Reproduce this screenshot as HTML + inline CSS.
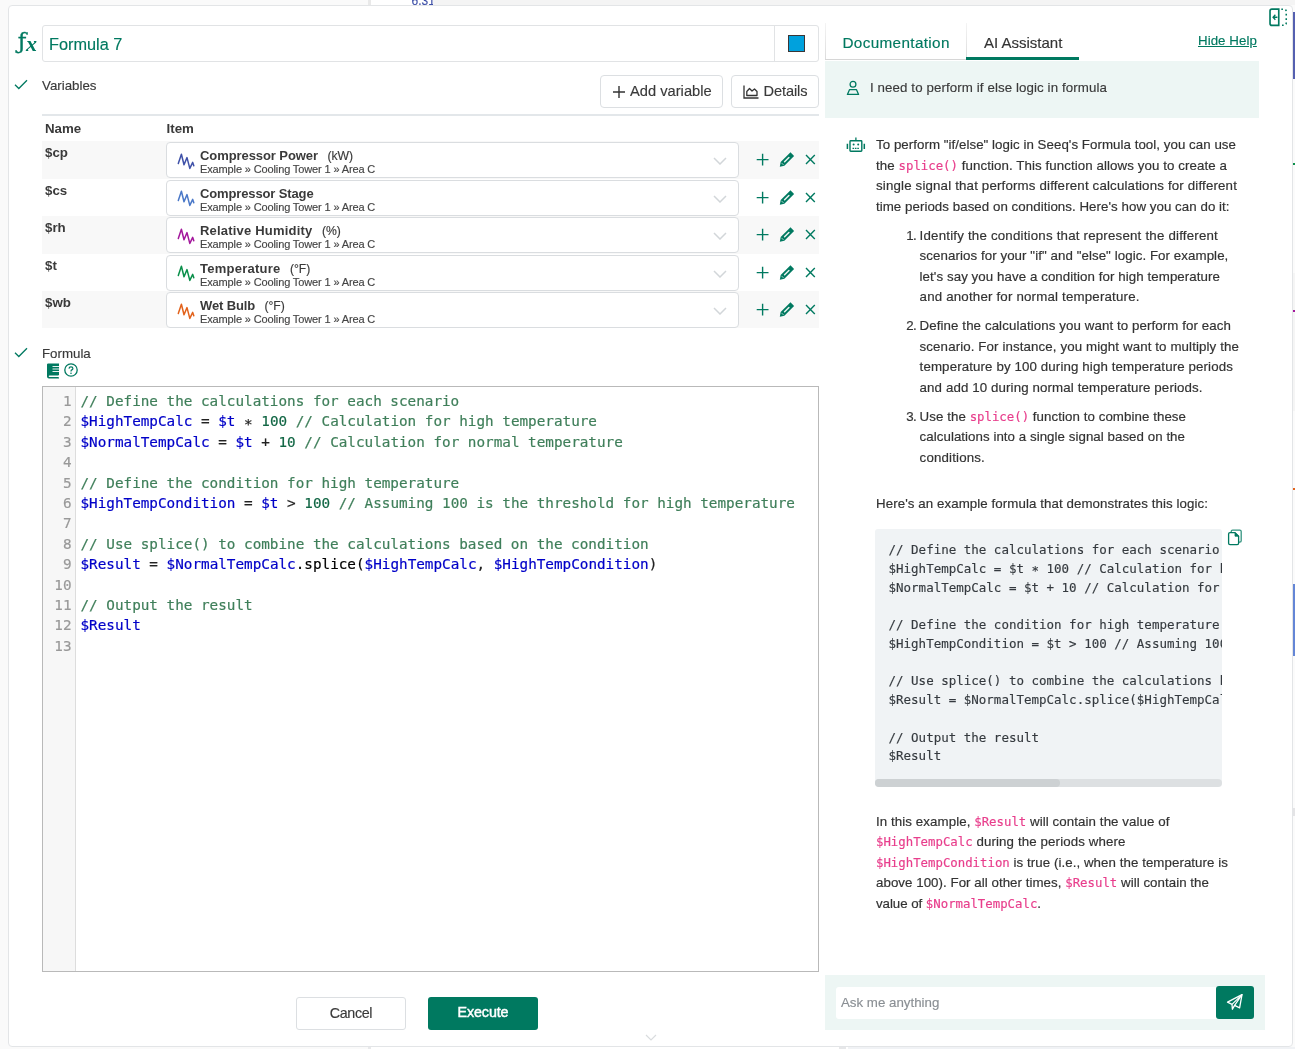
<!DOCTYPE html>
<html lang="en">
<head>
<meta charset="utf-8">
<title>Formula 7</title>
<style>
*{box-sizing:border-box}
html,body{margin:0;padding:0}
body{will-change:transform;width:1295px;height:1049px;overflow:hidden;background:#fafafa;font-family:"Liberation Sans",sans-serif;font-size:13px;color:#3a3a3a;position:relative}
.abs{position:absolute}
.g{color:#007960}
#panel{position:absolute;left:8px;top:5px;width:1285px;height:1042px;background:#fff;border:1px solid #e3e5e7;border-radius:4px}
.t{position:absolute;white-space:nowrap;line-height:1;-webkit-text-stroke:0.15px}
.sp,.sn{-webkit-text-stroke:0.15px}.hdr,.vn,.sn b{-webkit-text-stroke:0}
.mono{font-family:"DejaVu Sans Mono","Liberation Mono",monospace}
/* backdrop */
#bd1{left:0;top:0;width:368px;height:5px;background:#fafafa}
#bd2{left:368px;top:0;width:3px;height:5px;background:#e9e9e9}
#bd3{left:371px;top:0;width:62px;height:5px;background:#fff;overflow:hidden}
#bd4{left:433px;top:0;width:862px;height:5px;background:#f4f4f4}
</style>
</head>
<body>
<div class="abs" id="bd1"></div><div class="abs" id="bd2"></div>
<div class="abs" id="bd3"><span class="t" style="left:40.5px;top:-5px;font-size:12px;color:#3f51a8">6.31</span></div>
<div class="abs" id="bd4"></div>
<div class="abs" style="left:0;top:1047px;width:368px;height:2px;background:#fafafa"></div><div class="abs" style="left:368px;top:1047px;width:3px;height:2px;background:#e8e9eb"></div><div class="abs" style="left:371px;top:1047px;width:468px;height:2px;background:#fff"></div><div class="abs" style="left:839px;top:1047px;width:7px;height:2px;background:#e6e7e9"></div><div class="abs" style="left:846px;top:1047px;width:2px;height:2px;background:#fff"></div><div class="abs" style="left:848px;top:1047px;width:447px;height:2px;background:#f0f2f5"></div>
<div class="abs" style="left:1293px;top:5px;width:2px;height:1042px;background:#fbfbfb"></div>
<div class="abs" style="left:1293px;top:12px;width:2px;height:67px;background:#5560b0"></div>
<div class="abs" style="left:1293px;top:273px;width:2px;height:138px;background:#f5f5f5"></div>
<div class="abs" style="left:1293px;top:163px;width:2px;height:2px;background:#0a8f4a"></div>
<div class="abs" style="left:1293px;top:310px;width:2px;height:2px;background:#a3179c"></div>
<div class="abs" style="left:1293px;top:488px;width:2px;height:2px;background:#e2621b"></div>
<div class="abs" style="left:1293px;top:584px;width:2px;height:72px;background:#6486d6"></div>
<div class="abs" style="left:1293px;top:808px;width:2px;height:8px;background:#e4e4e6"></div>
<div id="panel"></div>
<!--LEFT-->
<style>
#fx{left:17.7px;top:25.8px;font-family:"DejaVu Serif",serif;color:#007960;font-size:23px;line-height:30px;-webkit-text-stroke:0.35px #007960}
#fx i{font-family:"Liberation Serif",serif;font-weight:bold;font-style:italic;font-size:22px;margin-left:-0.3px;position:relative;top:2.4px;-webkit-text-stroke:0}
#title{left:42px;top:25px;width:777px;height:37px;border:1px solid #e1e3e5;border-radius:3px;background:#fff}
#title .t{left:6px;top:10px;font-size:16.3px;color:#007960}
#title .div{position:absolute;left:731px;top:0;width:1px;height:35px;background:#e1e3e5}
#sw{left:788px;top:35px;width:17px;height:17px;background:#00a1dd;border:1px solid #3b3636}
.btn{position:absolute;height:33px;border:1px solid #dcdfe2;border-radius:4px;background:#fff;top:75px}
.hdr{font-weight:bold;font-size:13.3px}
.row{position:absolute;left:42px;width:777px;height:37.5px}
.row.odd{background:#f8f8f8}
.sel{position:absolute;left:124px;top:1px;width:573px;height:36px;border:1px solid #dadde0;border-radius:4px;background:#fff}
.vn{position:absolute;left:3px;top:4px;font-weight:bold;font-size:13.3px;line-height:15px}
.sn{position:absolute;left:33px;top:5px;font-size:13px;line-height:15px;white-space:nowrap}
.sn b{font-weight:bold}
.u{margin-left:5.8px;font-size:12.2px}
.sp{position:absolute;left:33px;top:20px;letter-spacing:-0.13px;font-size:11px;line-height:13px;white-space:nowrap;color:#444}
</style>
<div class="abs t" id="fx">ƒ<i>x</i></div>
<div class="abs" id="title"><span class="t">Formula 7</span><span class="div"></span></div>
<div class="abs" id="sw"></div>
<svg class="abs" style="left:14px;top:79px" width="14" height="11" viewBox="0 0 14 11"><path d="M1 5.8 L4.8 9.5 L13 1.2" fill="none" stroke="#007960" stroke-width="1.3"/></svg>
<span class="t" style="left:42px;top:79px;font-size:13.3px">Variables</span>
<div class="btn" style="left:600px;width:123px"><svg class="abs" style="left:11px;top:9px" width="14" height="14" viewBox="0 0 14 14"><path d="M7 1V13M1 7H13" stroke="#333" stroke-width="1.4" fill="none"/></svg><span class="t" style="left:29px;top:8px;font-size:14.7px">Add variable</span></div>
<div class="btn" style="left:731px;width:88px"><svg class="abs" style="left:11px;top:9px" width="16" height="14" viewBox="0 0 16 14"><path d="M1 0.5V13H15.5" stroke="#333" stroke-width="1.3" fill="none"/><path d="M3.8 10.5V6.5L6.5 3.5L9 6L11.5 4L14 6.5V10.5Z" stroke="#333" stroke-width="1.3" fill="none" stroke-linejoin="round"/></svg><span class="t" style="left:31.5px;top:8px;font-size:14.6px;letter-spacing:-0.1px">Details</span></div>
<div class="abs" style="left:42px;top:114px;width:777px;height:2px;background:#e3e7ea"></div>
<span class="t hdr" style="left:45px;top:122px">Name</span>
<span class="t hdr" style="left:166.6px;top:122px">Item</span>
<div class="row odd" style="top:141.0px"><span class="vn">$cp</span><div class="sel"><svg class="abs" style="left:10.2px;top:9.6px" width="18" height="17" viewBox="0 0 18 17"><path d="M1.3 10.6L4.4 1.2L7 11.8L10 4.6L12.8 15.4L15.7 9.4L16.8 12.7" fill="none" stroke="#3f51a8" stroke-width="1.5" stroke-linejoin="round" stroke-linecap="round"/></svg><span class="sn"><b style="letter-spacing:-0.075px">Compressor Power</b> <span class="u">(kW)</span></span><span class="sp">Example » Cooling Tower 1 » Area C</span><svg class="abs" style="left:546px;top:14px" width="14" height="8" viewBox="0 0 14 8"><path d="M1 1L7 7L13 1" fill="none" stroke="#d2d6d9" stroke-width="1.5"/></svg></div>
<svg class="abs" style="left:713px;top:11px" width="62" height="16" viewBox="0 0 62 16"><path d="M7.6 1.7V13.5M1.7 7.6H13.5" stroke="#007960" stroke-width="1.4" fill="none"/><path d="M24.8 14.7L25.7 10L35.5 0.3L39.1 3.9L29.4 13.7Z" fill="#007960"/><path d="M29.6 9.8L33.9 5.5" stroke="#e9f3f0" stroke-width="1.5" stroke-linecap="round"/><path d="M26.4 10.8L28.7 13.1" stroke="#dfeeea" stroke-width="0.7"/><path d="M51 3.1L59.8 11.9M59.8 3.1L51 11.9" stroke="#007960" stroke-width="1.4" fill="none"/></svg></div>
<div class="row" style="top:178.5px"><span class="vn">$cs</span><div class="sel"><svg class="abs" style="left:10.2px;top:9.6px" width="18" height="17" viewBox="0 0 18 17"><path d="M1.3 10.6L4.4 1.2L7 11.8L10 4.6L12.8 15.4L15.7 9.4L16.8 12.7" fill="none" stroke="#4a78c8" stroke-width="1.5" stroke-linejoin="round" stroke-linecap="round"/></svg><span class="sn"><b style="letter-spacing:-0.13px">Compressor Stage</b></span><span class="sp">Example » Cooling Tower 1 » Area C</span><svg class="abs" style="left:546px;top:14px" width="14" height="8" viewBox="0 0 14 8"><path d="M1 1L7 7L13 1" fill="none" stroke="#d2d6d9" stroke-width="1.5"/></svg></div>
<svg class="abs" style="left:713px;top:11px" width="62" height="16" viewBox="0 0 62 16"><path d="M7.6 1.7V13.5M1.7 7.6H13.5" stroke="#007960" stroke-width="1.4" fill="none"/><path d="M24.8 14.7L25.7 10L35.5 0.3L39.1 3.9L29.4 13.7Z" fill="#007960"/><path d="M29.6 9.8L33.9 5.5" stroke="#e9f3f0" stroke-width="1.5" stroke-linecap="round"/><path d="M26.4 10.8L28.7 13.1" stroke="#dfeeea" stroke-width="0.7"/><path d="M51 3.1L59.8 11.9M59.8 3.1L51 11.9" stroke="#007960" stroke-width="1.4" fill="none"/></svg></div>
<div class="row odd" style="top:216.0px"><span class="vn">$rh</span><div class="sel"><svg class="abs" style="left:10.2px;top:9.6px" width="18" height="17" viewBox="0 0 18 17"><path d="M1.3 10.6L4.4 1.2L7 11.8L10 4.6L12.8 15.4L15.7 9.4L16.8 12.7" fill="none" stroke="#a3179c" stroke-width="1.5" stroke-linejoin="round" stroke-linecap="round"/></svg><span class="sn"><b style="letter-spacing:0.2px">Relative Humidity</b> <span class="u">(%)</span></span><span class="sp">Example » Cooling Tower 1 » Area C</span><svg class="abs" style="left:546px;top:14px" width="14" height="8" viewBox="0 0 14 8"><path d="M1 1L7 7L13 1" fill="none" stroke="#d2d6d9" stroke-width="1.5"/></svg></div>
<svg class="abs" style="left:713px;top:11px" width="62" height="16" viewBox="0 0 62 16"><path d="M7.6 1.7V13.5M1.7 7.6H13.5" stroke="#007960" stroke-width="1.4" fill="none"/><path d="M24.8 14.7L25.7 10L35.5 0.3L39.1 3.9L29.4 13.7Z" fill="#007960"/><path d="M29.6 9.8L33.9 5.5" stroke="#e9f3f0" stroke-width="1.5" stroke-linecap="round"/><path d="M26.4 10.8L28.7 13.1" stroke="#dfeeea" stroke-width="0.7"/><path d="M51 3.1L59.8 11.9M59.8 3.1L51 11.9" stroke="#007960" stroke-width="1.4" fill="none"/></svg></div>
<div class="row" style="top:253.5px"><span class="vn">$t</span><div class="sel"><svg class="abs" style="left:10.2px;top:9.6px" width="18" height="17" viewBox="0 0 18 17"><path d="M1.3 10.6L4.4 1.2L7 11.8L10 4.6L12.8 15.4L15.7 9.4L16.8 12.7" fill="none" stroke="#0a8f4a" stroke-width="1.5" stroke-linejoin="round" stroke-linecap="round"/></svg><span class="sn"><b style="letter-spacing:0.245px">Temperature</b> <span class="u">(°F)</span></span><span class="sp">Example » Cooling Tower 1 » Area C</span><svg class="abs" style="left:546px;top:14px" width="14" height="8" viewBox="0 0 14 8"><path d="M1 1L7 7L13 1" fill="none" stroke="#d2d6d9" stroke-width="1.5"/></svg></div>
<svg class="abs" style="left:713px;top:11px" width="62" height="16" viewBox="0 0 62 16"><path d="M7.6 1.7V13.5M1.7 7.6H13.5" stroke="#007960" stroke-width="1.4" fill="none"/><path d="M24.8 14.7L25.7 10L35.5 0.3L39.1 3.9L29.4 13.7Z" fill="#007960"/><path d="M29.6 9.8L33.9 5.5" stroke="#e9f3f0" stroke-width="1.5" stroke-linecap="round"/><path d="M26.4 10.8L28.7 13.1" stroke="#dfeeea" stroke-width="0.7"/><path d="M51 3.1L59.8 11.9M59.8 3.1L51 11.9" stroke="#007960" stroke-width="1.4" fill="none"/></svg></div>
<div class="row odd" style="top:291.0px;height:36.6px"><span class="vn">$wb</span><div class="sel"><svg class="abs" style="left:10.2px;top:9.6px" width="18" height="17" viewBox="0 0 18 17"><path d="M1.3 10.6L4.4 1.2L7 11.8L10 4.6L12.8 15.4L15.7 9.4L16.8 12.7" fill="none" stroke="#e2621b" stroke-width="1.5" stroke-linejoin="round" stroke-linecap="round"/></svg><span class="sn"><b style="letter-spacing:-0.14px">Wet Bulb</b> <span class="u">(°F)</span></span><span class="sp">Example » Cooling Tower 1 » Area C</span><svg class="abs" style="left:546px;top:14px" width="14" height="8" viewBox="0 0 14 8"><path d="M1 1L7 7L13 1" fill="none" stroke="#d2d6d9" stroke-width="1.5"/></svg></div>
<svg class="abs" style="left:713px;top:11px" width="62" height="16" viewBox="0 0 62 16"><path d="M7.6 1.7V13.5M1.7 7.6H13.5" stroke="#007960" stroke-width="1.4" fill="none"/><path d="M24.8 14.7L25.7 10L35.5 0.3L39.1 3.9L29.4 13.7Z" fill="#007960"/><path d="M29.6 9.8L33.9 5.5" stroke="#e9f3f0" stroke-width="1.5" stroke-linecap="round"/><path d="M26.4 10.8L28.7 13.1" stroke="#dfeeea" stroke-width="0.7"/><path d="M51 3.1L59.8 11.9M59.8 3.1L51 11.9" stroke="#007960" stroke-width="1.4" fill="none"/></svg></div>
<style>
#ed{left:42px;top:386px;width:777px;height:586px;border:1px solid #b9b9b9;background:#fff;overflow:hidden}
#gut{position:absolute;left:0;top:0;width:33px;height:100%;background:#f7f7f7;border-right:1px solid #ddd}
#code{position:absolute;left:0;top:4px;width:100%;font-family:"DejaVu Sans Mono","Liberation Mono",monospace;font-size:14.3px}
.ln{height:20.42px;line-height:20.42px;white-space:pre;padding-left:37.5px;position:relative;color:#222;-webkit-text-stroke:0.2px}
.no{position:absolute;left:0;width:28.5px;text-align:right;color:#999}
.ast{position:relative;top:2.5px}
.cc{color:#3f7f5a}.cv{color:#0000c8}.cn{color:#116644}.co{color:#222}.ck{color:#000}
</style>
<svg class="abs" style="left:14px;top:347px" width="14" height="11" viewBox="0 0 14 11"><path d="M1 5.8 L4.8 9.5 L13 1.2" fill="none" stroke="#007960" stroke-width="1.3"/></svg>
<span class="t" style="left:42px;top:347px;font-size:13.3px">Formula</span>
<svg class="abs" style="left:47px;top:363px" width="13" height="16" viewBox="0 0 13 16"><path d="M0 1.5Q0 0.5 1.2 0.5H12V12.2H11V14.2H12V15.5H2Q0 15.5 0 13.5Z" fill="#007960"/><path d="M5.5 3.5H12M5.5 6H12M5.5 8.5H12" stroke="#fff" stroke-width="0.9"/><path d="M2.5 12.4H11V14H2.5Q1.7 13.9 1.7 13.2Q1.7 12.5 2.5 12.4Z" fill="#fff"/></svg>
<svg class="abs" style="left:64px;top:363px" width="14" height="14" viewBox="0 0 14 14"><circle cx="7" cy="7" r="6.2" fill="none" stroke="#007960" stroke-width="1.3"/><path d="M5 5.6Q5.1 3.8 7 3.8Q8.9 3.8 8.9 5.4Q8.9 6.4 7.8 6.9Q7 7.3 7 8.4" fill="none" stroke="#007960" stroke-width="1.2"/><circle cx="7" cy="10.2" r="0.8" fill="#007960"/></svg>
<div class="abs" id="ed"><div id="gut"></div><div id="code">
<div class="ln"><span class="no">1</span><span class="cc">// Define the calculations for each scenario</span></div>
<div class="ln"><span class="no">2</span><span class="cv">$HighTempCalc</span><span class="co"> = </span><span class="cv">$t</span><span class="co"> <span class="ast">*</span> </span><span class="cn">100</span><span class="co"> </span><span class="cc">// Calculation for high temperature</span></div>
<div class="ln"><span class="no">3</span><span class="cv">$NormalTempCalc</span><span class="co"> = </span><span class="cv">$t</span><span class="co"> + </span><span class="cn">10</span><span class="co"> </span><span class="cc">// Calculation for normal temperature</span></div>
<div class="ln"><span class="no">4</span></div>
<div class="ln"><span class="no">5</span><span class="cc">// Define the condition for high temperature</span></div>
<div class="ln"><span class="no">6</span><span class="cv">$HighTempCondition</span><span class="co"> = </span><span class="cv">$t</span><span class="co"> &gt; </span><span class="cn">100</span><span class="co"> </span><span class="cc">// Assuming 100 is the threshold for high temperature</span></div>
<div class="ln"><span class="no">7</span></div>
<div class="ln"><span class="no">8</span><span class="cc">// Use splice() to combine the calculations based on the condition</span></div>
<div class="ln"><span class="no">9</span><span class="cv">$Result</span><span class="co"> = </span><span class="cv">$NormalTempCalc</span><span class="ck">.splice(</span><span class="cv">$HighTempCalc</span><span class="co">, </span><span class="cv">$HighTempCondition</span><span class="co">)</span></div>
<div class="ln"><span class="no">10</span></div>
<div class="ln"><span class="no">11</span><span class="cc">// Output the result</span></div>
<div class="ln"><span class="no">12</span><span class="cv">$Result</span></div>
<div class="ln"><span class="no">13</span></div>
</div></div>
<div class="abs" style="left:296px;top:997px;width:110px;height:33px;border:1px solid #dcdfe2;border-radius:3px;background:#fff"><span class="t" style="left:0;width:108px;text-align:center;top:8px;font-size:14.3px;letter-spacing:-0.35px">Cancel</span></div>
<div class="abs" style="left:428px;top:997px;width:110px;height:33px;border-radius:3px;background:#007960"><span class="t" style="left:0;width:110px;text-align:center;top:8px;font-size:14.3px;color:#fff;-webkit-text-stroke:0.45px #fff;letter-spacing:-0.1px">Execute</span></div>
<svg class="abs" style="left:645px;top:1034px" width="12" height="7" viewBox="0 0 12 7"><path d="M1 1L6 6L11 1" fill="none" stroke="#d9dcde" stroke-width="1.2"/></svg>


<style>
.rl{position:absolute;white-space:nowrap;font-size:13.3px;line-height:20px;color:#333;-webkit-text-stroke:0.18px}
.rl code,.pk{font-family:"DejaVu Sans Mono","Liberation Mono",monospace;font-size:12.35px;color:#e83e8c;letter-spacing:0}
#tabs{left:825px;top:23px;width:440px;height:37px}
#tabdoc{left:825px;top:23px;width:142px;height:37px;border-bottom:1px solid #d6d6d6;background:linear-gradient(#f4f4f4,#dcdcdc) left top/1px 100% no-repeat,linear-gradient(#f4f4f4,#dcdcdc) right top/1px 100% no-repeat}
#tabai{left:966px;top:57px;width:113px;height:3px;background:#007960}
#umsg{left:825px;top:61px;width:434px;height:57px;background:#edf6f4}
#pre{left:875px;top:529px;width:347px;height:258px;background:#f0f3f5;border-radius:3px;overflow:hidden}
#pre pre{margin:0;position:absolute;left:13.5px;top:12px;font-family:"DejaVu Sans Mono","Liberation Mono",monospace;font-size:12.5px;line-height:18.75px;color:#353a3f;-webkit-text-stroke:0.15px}
.ast2{position:relative;top:2.2px}
#sbt{position:absolute;left:0;top:250px;width:347px;height:8px;background:#dde0e2;border-radius:4px}
#sbh{position:absolute;left:0;top:250px;width:185px;height:8px;background:#cdd1d3;border-radius:4px}
#ask{left:825px;top:975px;width:440px;height:55px;background:#edf6f4}
#askin{left:836px;top:987px;width:381px;height:32px;background:#fff;border-radius:3px 0 0 3px}
#askbtn{left:1216px;top:986px;width:38px;height:33px;background:#007960;border-radius:3px}
</style>
<div class="abs" id="tabdoc"></div>
<span class="t g" style="left:842.4px;top:34.5px;font-size:15.3px;letter-spacing:0.35px">Documentation</span>
<span class="t" style="left:984px;top:34.5px;font-size:15px;color:#333">AI Assistant</span>
<div class="abs" id="tabai"></div>
<span class="t g" style="left:1198px;top:34px;font-size:13.3px;letter-spacing:0.05px;text-decoration:underline">Hide Help</span>
<svg class="abs" style="left:1268.5px;top:8px" width="19.5" height="18.5" viewBox="0 0 19 17" preserveAspectRatio="none"><path d="M9.5 1H2.8Q1 1 1 2.8V14.2Q1 16 2.8 16H9.5Z" fill="none" stroke="#007960" stroke-width="1.6"/><path d="M8.2 8.5H4.2M6.2 6.2L4 8.5L6.2 10.8" fill="none" stroke="#007960" stroke-width="1.3"/><path d="M12 1.2H14.5Q16.8 1.2 16.8 3.5V13.5Q16.8 15.8 14.5 15.8H12" fill="none" stroke="#007960" stroke-width="1.5" stroke-dasharray="1.6 2.4"/></svg>
<div class="abs" id="umsg"></div>
<svg class="abs" style="left:846px;top:80px" width="14" height="16" viewBox="0 0 14 16"><circle cx="7" cy="4.2" r="2.9" fill="none" stroke="#007960" stroke-width="1.3"/><path d="M3.6 9.6H10.4L12.6 14.4H1.4Z" fill="none" stroke="#007960" stroke-width="1.3" stroke-linejoin="round"/></svg>
<span class="t" style="left:870px;top:81px;font-size:13.3px;letter-spacing:0.1px">I need to perform if else logic in formula</span>
<svg class="abs" style="left:845.6px;top:137px" width="20" height="16" viewBox="0 0 20 16"><path d="M9.9 0.5V3.5" stroke="#007960" stroke-width="1.3"/><rect x="4" y="3.7" width="11.8" height="10.6" rx="0.7" fill="none" stroke="#007960" stroke-width="1.4"/><path d="M1.4 6.8V12M18.3 6.8V12" stroke="#007960" stroke-width="1.5"/><circle cx="7.6" cy="7.6" r="1" fill="#007960"/><circle cx="12.2" cy="7.6" r="1" fill="#007960"/><path d="M6.5 11.3H13.3" stroke="#007960" stroke-width="1.2" stroke-dasharray="1.6 0.8"/></svg>
<div class="abs" id="pre"><pre>// Define the calculations for each scenario
$HighTempCalc = $t <span class="ast2">*</span> 100 // Calculation for high temperature
$NormalTempCalc = $t + 10 // Calculation for normal temperature

// Define the condition for high temperature
$HighTempCondition = $t &gt; 100 // Assuming 100 is the threshold for high temperature

// Use splice() to combine the calculations based on the condition
$Result = $NormalTempCalc.splice($HighTempCalc, $HighTempCondition)

// Output the result
$Result</pre><div id="sbt"></div><div id="sbh"></div></div>
<svg class="abs" style="left:1227px;top:529px" width="16" height="17" viewBox="0 0 16 17"><path d="M4.2 3.2V2.6Q4.2 1.2 5.6 1.2H12.8Q14.2 1.2 14.2 2.6V11.8Q14.2 13.2 12.8 13.2H12" fill="none" stroke="#007960" stroke-opacity="0.8" stroke-width="1.3"/><path d="M1.6 5V14.2Q1.6 15.6 3 15.6H10.2Q11.6 15.6 11.6 14.2V7.2L8 3.6H3Q1.6 3.6 1.6 5Z" fill="#fff" stroke="#007960" stroke-width="1.3" stroke-linejoin="round"/><path d="M8 3.6V7.2H11.6Z" fill="#007960" stroke="#007960" stroke-width="0.8"/></svg>
<div class="abs" id="ask"></div><div class="abs" id="askin"></div>
<span class="t" style="left:841px;top:996px;font-size:13.3px;color:#8a8f94">Ask me anything</span>
<div class="abs" id="askbtn"><svg class="abs" style="left:10px;top:7px" width="18" height="18" viewBox="0 0 18 18"><path d="M1.5 9.2L16 1.6L13.6 14.8L8.6 12.4L6.4 16.2L6 11.4Z" fill="none" stroke="#fff" stroke-width="1.3" stroke-linejoin="round"/><path d="M6 11.4L16 1.6L8.6 12.4" fill="none" stroke="#fff" stroke-width="1.2" stroke-linejoin="round"/></svg></div>
<div class="rl" id="rl0" style="left:876px;top:135.00px;letter-spacing:0.046px">To perform "if/else" logic in Seeq's Formula tool, you can use</div>
<div class="rl" id="rl1" style="left:876px;top:156.00px;letter-spacing:0.083px">the <code>splice()</code> function. This function allows you to create a</div>
<div class="rl" id="rl2" style="left:876px;top:176.00px;letter-spacing:0.163px">single signal that performs different calculations for different</div>
<div class="rl" id="rl3" style="left:876px;top:197.00px;letter-spacing:0.049px">time periods based on conditions. Here's how you can do it:</div>
<div class="rl" id="rl4" style="left:919.6px;top:226.00px;letter-spacing:0.199px">Identify the conditions that represent the different</div>
<div class="rl" id="rl5" style="left:919.6px;top:246.00px;letter-spacing:0.072px">scenarios for your "if" and "else" logic. For example,</div>
<div class="rl" id="rl6" style="left:919.6px;top:267.00px;letter-spacing:0.072px">let's say you have a condition for high temperature</div>
<div class="rl" id="rl7" style="left:919.6px;top:287.00px;letter-spacing:0.183px">and another for normal temperature.</div>
<div class="rl" id="rl8" style="left:919.6px;top:316.00px;letter-spacing:0.090px">Define the calculations you want to perform for each</div>
<div class="rl" id="rl9" style="left:919.6px;top:337.00px;letter-spacing:0.112px">scenario. For instance, you might want to multiply the</div>
<div class="rl" id="rl10" style="left:919.6px;top:357.00px;letter-spacing:0.118px">temperature by 100 during high temperature periods</div>
<div class="rl" id="rl11" style="left:919.6px;top:378.00px;letter-spacing:0.112px">and add 10 during normal temperature periods.</div>
<div class="rl" id="rl12" style="left:919.6px;top:407.00px;letter-spacing:0.065px">Use the <code>splice()</code> function to combine these</div>
<div class="rl" id="rl13" style="left:919.6px;top:427.00px;letter-spacing:0.049px">calculations into a single signal based on the</div>
<div class="rl" id="rl14" style="left:919.6px;top:448.00px;letter-spacing:0.165px">conditions.</div>
<div class="rl" id="rl15" style="left:876px;top:494.00px;letter-spacing:0.077px">Here's an example formula that demonstrates this logic:</div>
<div class="rl" id="rl16" style="left:876px;top:812.00px;letter-spacing:0.083px">In this example, <code>$Result</code> will contain the value of</div>
<div class="rl" id="rl17" style="left:876px;top:832.00px;letter-spacing:0.117px"><code>$HighTempCalc</code> during the periods where</div>
<div class="rl" id="rl18" style="left:876px;top:853.00px;letter-spacing:0.062px"><code>$HighTempCondition</code> is true (i.e., when the temperature is</div>
<div class="rl" id="rl19" style="left:876px;top:873.00px;letter-spacing:0.046px">above 100). For all other times, <code>$Result</code> will contain the</div>
<div class="rl" id="rl20" style="left:876px;top:894.00px;letter-spacing:-0.047px">value of <code>$NormalTempCalc</code>.</div>
<div class="rl" style="left:906.2px;top:226.00px;letter-spacing:-0.6px">1.</div>
<div class="rl" style="left:906.2px;top:316.00px;letter-spacing:-0.6px">2.</div>
<div class="rl" style="left:906.2px;top:407.00px;letter-spacing:-0.6px">3.</div>
</body>
</html>
